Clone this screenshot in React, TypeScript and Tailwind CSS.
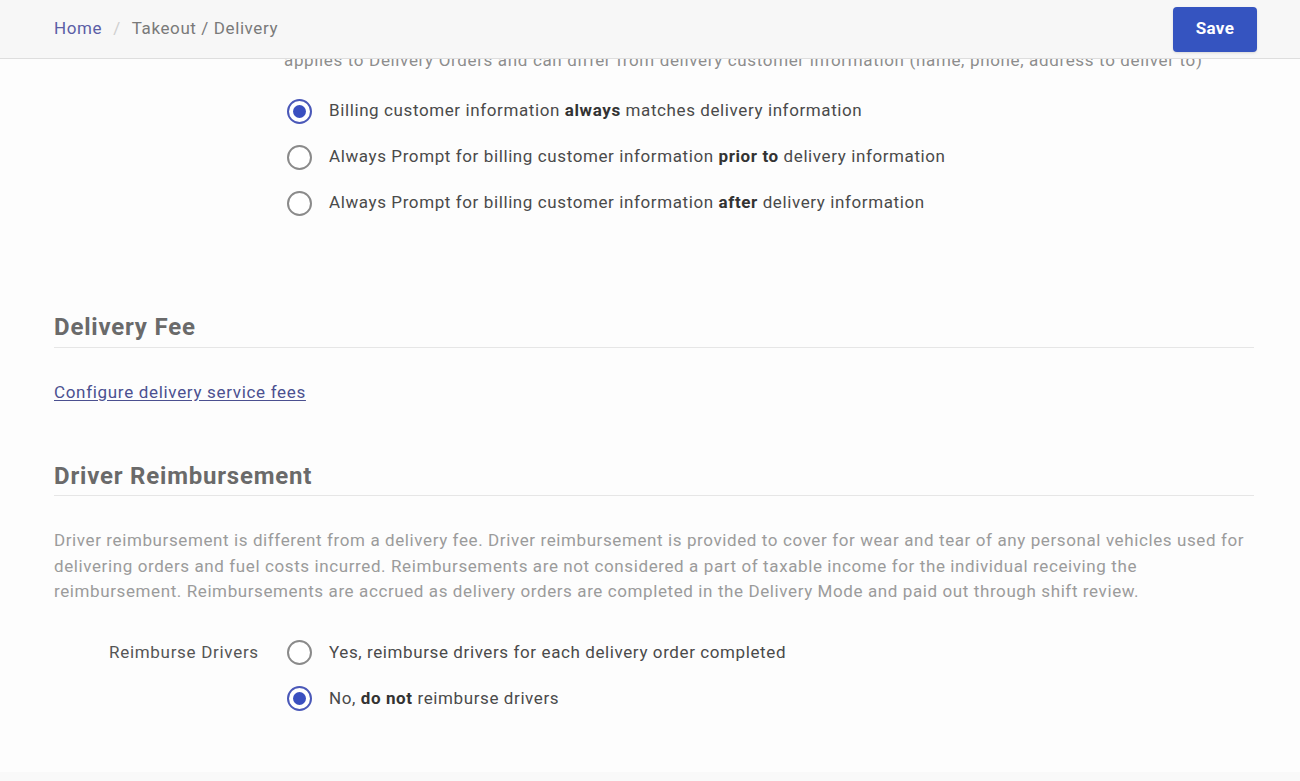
import React, { useState } from "react";

type Option = { id: string; before: string; bold: string; after: string };

const billingOptions: Option[] = [
  { id: "always", before: "Billing customer information ", bold: "always", after: " matches delivery information" },
  { id: "prior", before: "Always Prompt for billing customer information ", bold: "prior to", after: " delivery information" },
  { id: "after", before: "Always Prompt for billing customer information ", bold: "after", after: " delivery information" },
];

const reimburseOptions: Option[] = [
  { id: "yes", before: "Yes, reimburse drivers for each delivery order completed", bold: "", after: "" },
  { id: "no", before: "No, ", bold: "do not", after: " reimburse drivers" },
];

const Radio: React.FC<{ checked: boolean; onClick: () => void; option: Option }> = ({ checked, onClick, option }) => (
  <button onClick={onClick} className="flex h-[46px] items-center gap-[17px] text-left">
    <span
      className={`flex h-[25px] w-[25px] items-center justify-center rounded-full border-2 ${
        checked ? "border-[#4a58b8]" : "border-[#8a8a8a]"
      } bg-white`}
    >
      {checked && <span className="h-[13px] w-[13px] rounded-full bg-[#3a4fc0]" />}
    </span>
    <span className="text-[17px] tracking-[0.6px] text-[#4a4a4a]">
      {option.before}
      {option.bold && <b className="font-bold text-[#333]">{option.bold}</b>}
      {option.after}
    </span>
  </button>
);

const SectionHeading: React.FC<{ title: string; pb: string }> = ({ title, pb }) => (
  <div className={`border-b border-[#e6e6e6] ${pb}`}>
    <h2 className="text-[24px] leading-[30px] font-bold tracking-[0.8px] text-[#6a6a6a]">{title}</h2>
  </div>
);

export default function App() {
  const [billing, setBilling] = useState("always");
  const [reimburse, setReimburse] = useState("no");

  return (
    <div className="flex h-[781px] w-[1300px] flex-col overflow-hidden bg-[#fdfdfd] font-['Roboto',sans-serif]">
      <header className="flex h-[59px] shrink-0 items-center justify-between border-b border-[#dedede] bg-[#f7f7f7] pl-[54px] pr-[43px]">
        <nav className="flex items-center text-[17px] tracking-[0.6px]">
          <a className="text-[#5b5ea6]">Home</a>
          <span className="px-[11px] text-[#cfcfcf]">/</span>
          <span className="text-[#7a7a7a]">Takeout / Delivery</span>
        </nav>
        <button className="h-[45px] w-[84px] rounded-[4px] bg-[#3554c0] text-[17px] font-bold tracking-[0.4px] text-white shadow-sm">
          Save
        </button>
      </header>

      <main className="flex-1 overflow-hidden pl-[54px] pr-[46px]">
        <div className="-mt-[10px] pl-[230px] text-[17px] leading-[22px] tracking-[0.65px] text-[#8d8d8d]">
          applies to Delivery Orders and can differ from delivery customer information (name, phone, address to deliver to)
        </div>

        <div className="mt-[17px] flex flex-col pl-[233px]">
          {billingOptions.map((o) => (
            <Radio key={o.id} option={o} checked={billing === o.id} onClick={() => setBilling(o.id)} />
          ))}
        </div>

        <div className="mt-[86px]">
          <SectionHeading title="Delivery Fee" pb="pb-[5px]" />
        </div>
        <div className="mt-[32px] leading-[24px]">
          <a className="text-[17px] tracking-[0.68px] text-[#4b5090] underline underline-offset-2">
            Configure delivery service fees
          </a>
        </div>

        <div className="mt-[56px]">
          <SectionHeading title="Driver Reimbursement" pb="pb-[4px]" />
        </div>
        <p className="mt-[32px] text-[17px] leading-[25.5px] tracking-[0.6px] text-[#9b9b9b]">
          Driver reimbursement is different from a delivery fee. Driver reimbursement is provided to cover for wear and
          tear of any personal vehicles used for delivering orders and fuel costs incurred. Reimbursements are not
          considered a part of taxable income for the individual receiving the reimbursement. Reimbursements are accrued
          as delivery orders are completed in the Delivery Mode and paid out through shift review.
        </p>

        <div className="mt-[25px] flex">
          <div className="flex h-[46px] w-[233px] items-center pl-[55px] text-[17px] tracking-[0.7px] text-[#555]">
            Reimburse Drivers
          </div>
          <div className="flex flex-col">
            {reimburseOptions.map((o) => (
              <Radio key={o.id} option={o} checked={reimburse === o.id} onClick={() => setReimburse(o.id)} />
            ))}
          </div>
        </div>
      </main>
      <div className="h-[9px] shrink-0 bg-[#f9f9f9]" />
    </div>
  );
}
